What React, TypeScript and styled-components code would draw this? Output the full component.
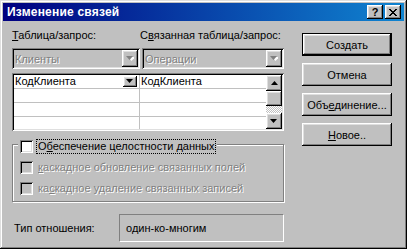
import React from 'react';
import styled, { createGlobalStyle, css } from 'styled-components';

const Global = createGlobalStyle`
  html, body { margin: 0; padding: 0; background: #c0c0c0; }
  body { font-family: "Liberation Sans", Arial, sans-serif; font-size: 11px; color: #000; }
  * { box-sizing: border-box; }
`;

const raised = css`
  box-shadow: inset -1px -1px #000, inset 1px 1px #fff, inset -2px -2px #808080, inset 2px 2px #dfdfdf;
`;
const sunken = css`
  box-shadow: inset 1px 1px #808080, inset -1px -1px #fff, inset 2px 2px #000, inset -2px -2px #dfdfdf;
`;
const disabledText = css`
  color: #808080;
  text-shadow: 1px 1px 0 #fff;
`;

const Window = styled.div`
  width: 407px;
  height: 249px;
  padding: 3px;
  background: #c0c0c0;
  box-shadow: inset -1px -1px #000, inset 1px 1px #dfdfdf, inset -2px -2px #808080, inset 2px 2px #fff;
  display: flex;
  flex-direction: column;
`;

const TitleBar = styled.div`
  height: 18px;
  display: flex;
  align-items: center;
  padding: 0 3px 0 4px;
  background: linear-gradient(90deg, #000080, #1084d0);
  color: #fff;
  font-weight: bold;
  font-size: 12px;
`;

const Title = styled.span`
  flex: 1;
  letter-spacing: 0.2px;
`;

const CapButton = styled.div<{ $gap?: number }>`
  width: 16px;
  height: 14px;
  margin-left: ${(p) => p.$gap ?? 0}px;
  background: #c0c0c0;
  ${raised};
  display: flex;
  align-items: center;
  justify-content: center;
  color: #000;
  font-size: 11px;
  font-weight: bold;
  line-height: 1;
`;

const Body = styled.div`
  flex: 1;
  display: flex;
  padding: 7px 0 0 9px;
`;

const LeftCol = styled.div`
  width: 272px;
  display: flex;
  flex-direction: column;
`;

const RightCol = styled.div`
  margin-left: 18px;
  padding-top: 5px;
  display: flex;
  flex-direction: column;
  gap: 7px;
`;

const LabelRow = styled.div`
  display: flex;
  height: 13px;
  line-height: 13px;
  margin-top: 1px;
`;

const Label = styled.span<{ $w?: number }>`
  width: ${(p) => (p.$w ? `${p.$w}px` : 'auto')};
  white-space: nowrap;
`;

const ComboRow = styled.div`
  display: flex;
  gap: 2px;
  margin-top: 6px;
`;

const Combo = styled.div<{ $w: number }>`
  width: ${(p) => p.$w}px;
  height: 21px;
  background: #c0c0c0;
  ${sunken};
  padding: 2px;
  display: flex;
  align-items: center;
`;

const ComboText = styled.span`
  flex: 1;
  padding-left: 1px;
  ${disabledText};
`;

const ComboButton = styled.div`
  width: 16px;
  height: 17px;
  background: #c0c0c0;
  ${raised};
  display: flex;
  align-items: center;
  justify-content: center;
`;

const Grid = styled.div`
  margin-top: 4px;
  height: 58px;
  background: #fff;
  ${sunken};
  padding: 2px;
  display: flex;
`;

const Table = styled.div`
  flex: 1;
  display: flex;
  flex-direction: column;
  overflow: hidden;
`;

const Row = styled.div`
  display: flex;
  height: 14px;
  flex: none;
  border-bottom: 1px solid #c0c0c0;
`;

const Cell = styled.div<{ $w?: number }>`
  width: ${(p) => (p.$w ? `${p.$w}px` : 'auto')};
  flex: ${(p) => (p.$w ? 'none' : '1')};
  border-right: ${(p) => (p.$w ? '1px solid #c0c0c0' : '0')};
  display: flex;
  align-items: center;
  padding-left: 1px;
  line-height: 13px;
`;

const CellText = styled.span`
  flex: 1;
`;

const CellDrop = styled.div`
  width: 14px;
  height: 11px;
  margin-right: 2px;
  background: #c0c0c0;
  ${raised};
  display: flex;
  align-items: center;
  justify-content: center;
`;

const Scrollbar = styled.div`
  width: 16px;
  display: flex;
  flex-direction: column;
`;

const ScrollBtn = styled.div<{ $h?: number }>`
  height: ${(p) => p.$h ?? 16}px;
  flex: none;
  background: #c0c0c0;
  ${raised};
  display: flex;
  align-items: center;
  justify-content: center;
`;

const Track = styled.div`
  flex: 1;
  background-color: #fff;
  background-image: repeating-conic-gradient(#c0c0c0 0 25%, #fff 0 50%);
  background-size: 2px 2px;
`;

const Group = styled.div`
  position: relative;
  margin-top: 13px;
  height: 58px;
  border: 1px solid #808080;
  box-shadow: inset 1px 1px #fff, 1px 1px #fff;
  padding: 16px 0 0 7px;
  display: flex;
  flex-direction: column;
  gap: 8px;
`;

const Legend = styled.div`
  position: absolute;
  top: -5px;
  left: 5px;
  padding: 0 2px;
  background: #c0c0c0;
  display: flex;
  align-items: center;
  gap: 4px;
`;

const Check = styled.div<{ $disabled?: boolean }>`
  width: 13px;
  height: 13px;
  flex: none;
  background: ${(p) => (p.$disabled ? '#c0c0c0' : '#fff')};
  ${sunken};
`;

const CheckRow = styled.div`
  display: flex;
  align-items: center;
  gap: 4px;
  height: 13px;
`;

const FocusText = styled.span`
  outline: 1px dotted #000;
  outline-offset: 0;
  padding: 0 1px;
  line-height: 13px;
`;

const DisabledLabel = styled.span`
  ${disabledText};
  line-height: 13px;
  padding-left: 1px;
`;

const RelRow = styled.div`
  display: flex;
  align-items: center;
  margin-top: 12px;
`;

const RelLabel = styled.span`
  width: 107px;
  padding-left: 2px;
`;

const RelField = styled.div`
  width: 165px;
  height: 28px;
  border: 1px solid;
  border-color: #808080 #fff #fff #808080;
  display: flex;
  align-items: center;
  padding-left: 6px;
`;

const Button = styled.div<{ $default?: boolean }>`
  width: 90px;
  height: 23px;
  background: #c0c0c0;
  display: flex;
  align-items: center;
  justify-content: center;
  ${(p) =>
    p.$default
      ? css`
          box-shadow: inset 0 0 0 1px #000, inset -2px -2px #000, inset 2px 2px #fff, inset -3px -3px #808080,
            inset 3px 3px #dfdfdf;
        `
      : raised};
`;

const Down = ({ color = '#000', shadow = false }: { color?: string; shadow?: boolean }) => (
  <svg width="8" height="5" viewBox="0 0 8 5">
    {shadow && <path d="M2 1h7L5.5 5z" fill="#fff" />}
    <path d="M0 0h7L3.5 4z" fill={color} />
  </svg>
);

const Up = () => (
  <svg width="7" height="4" viewBox="0 0 7 4">
    <path d="M3.5 0L7 4H0z" fill="#000" />
  </svg>
);

const Close = () => (
  <svg width="8" height="7" viewBox="0 0 8 7" shapeRendering="crispEdges">
    <path
      d="M0 0h2v1H0zM6 0h2v1H6zM1 1h2v1H1zM5 1h2v1H5zM2 2h4v1H2zM3 3h2v1H3zM2 4h4v1H2zM1 5h2v1H1zM5 5h2v1H5zM0 6h2v1H0zM6 6h2v1H6z"
      fill="#000"
    />
  </svg>
);

export default function App() {
  return (
    <>
      <Global />
      <Window>
        <TitleBar>
          <Title>Изменение связей</Title>
          <CapButton>?</CapButton>
          <CapButton $gap={2}>
            <Close />
          </CapButton>
        </TitleBar>
        <Body>
          <LeftCol>
            <LabelRow>
              <Label $w={128}>
                <u>Т</u>аблица/запрос:
              </Label>
              <Label>
                С<u>в</u>язанная таблица/запрос:
              </Label>
            </LabelRow>
            <ComboRow>
              <Combo $w={128}>
                <ComboText>Клиенты</ComboText>
                <ComboButton>
                  <Down color="#808080" shadow />
                </ComboButton>
              </Combo>
              <Combo $w={142}>
                <ComboText>Операции</ComboText>
                <ComboButton>
                  <Down color="#808080" shadow />
                </ComboButton>
              </Combo>
            </ComboRow>
            <Grid>
              <Table>
                <Row>
                  <Cell $w={126}>
                    <CellText>КодКлиента</CellText>
                    <CellDrop>
                      <Down />
                    </CellDrop>
                  </Cell>
                  <Cell>
                    <CellText>КодКлиента</CellText>
                  </Cell>
                </Row>
                {[0, 1, 2].map((i) => (
                  <Row key={i}>
                    <Cell $w={126} />
                    <Cell />
                  </Row>
                ))}
              </Table>
              <Scrollbar>
                <ScrollBtn>
                  <Up />
                </ScrollBtn>
                <ScrollBtn $h={15} />
                <Track />
                <ScrollBtn>
                  <Down />
                </ScrollBtn>
              </Scrollbar>
            </Grid>
            <Group>
              <Legend>
                <Check />
                <FocusText>
                  О<u>б</u>еспечение целостности данных
                </FocusText>
              </Legend>
              <CheckRow>
                <Check $disabled />
                <DisabledLabel>
                  <u>к</u>аскадное обновление связанных полей
                </DisabledLabel>
              </CheckRow>
              <CheckRow>
                <Check $disabled />
                <DisabledLabel>
                  ка<u>с</u>кадное удаление связанных записей
                </DisabledLabel>
              </CheckRow>
            </Group>
            <RelRow>
              <RelLabel>Тип отношения:</RelLabel>
              <RelField>один-ко-многим</RelField>
            </RelRow>
          </LeftCol>
          <RightCol>
            <Button $default>
              <span>
                Соз<u>д</u>ать
              </span>
            </Button>
            <Button>Отмена</Button>
            <Button>
              <span>
                Объ<u>е</u>динение...
              </span>
            </Button>
            <Button>
              <span>
                <u>Н</u>овое..
              </span>
            </Button>
          </RightCol>
        </Body>
      </Window>
    </>
  );
}
